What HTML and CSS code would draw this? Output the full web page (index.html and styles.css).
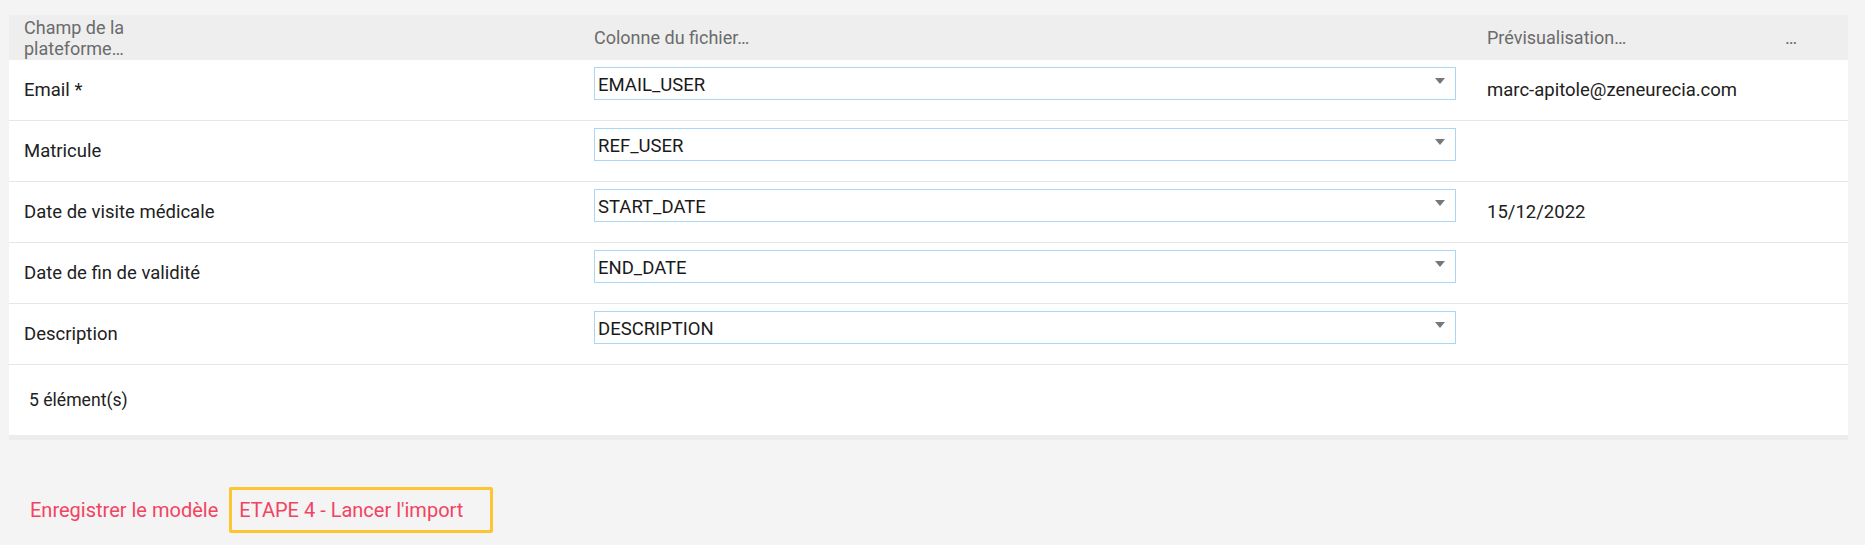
FILE: index.html
```html
<!DOCTYPE html>
<html lang="fr">
<head>
<meta charset="utf-8">
<title>Import</title>
<link rel="stylesheet" href="styles.css">
</head>
<body>
<div class="page">
  <div class="table">
    <div class="row head">
      <div class="cell hcell">Champ de la<br>plateforme…</div>
      <div class="cell hcell">Colonne du fichier…</div>
      <div class="cell hcell">Prévisualisation…</div>
      <div class="cell hcell">…</div>
    </div>
    <div class="row">
      <div class="cell label">Email *</div>
      <div class="cell selcell"><div class="select"><span>EMAIL_USER</span><span class="arrow"></span></div></div>
      <div class="cell label">marc-apitole@zeneurecia.com</div>
      <div class="cell"></div>
    </div>
    <div class="row">
      <div class="cell label">Matricule</div>
      <div class="cell selcell"><div class="select"><span>REF_USER</span><span class="arrow"></span></div></div>
      <div class="cell label"></div>
      <div class="cell"></div>
    </div>
    <div class="row">
      <div class="cell label">Date de visite médicale</div>
      <div class="cell selcell"><div class="select"><span>START_DATE</span><span class="arrow"></span></div></div>
      <div class="cell label">15/12/2022</div>
      <div class="cell"></div>
    </div>
    <div class="row">
      <div class="cell label">Date de fin de validité</div>
      <div class="cell selcell"><div class="select"><span>END_DATE</span><span class="arrow"></span></div></div>
      <div class="cell label"></div>
      <div class="cell"></div>
    </div>
    <div class="row">
      <div class="cell label">Description</div>
      <div class="cell selcell"><div class="select"><span>DESCRIPTION</span><span class="arrow"></span></div></div>
      <div class="cell label"></div>
      <div class="cell"></div>
    </div>
    <div class="footer">5 élément(s)</div>
  </div>
  <div class="actions">
    <button class="btn">Enregistrer le modèle</button>
    <button class="btn focused">ETAPE 4 - Lancer l'import</button>
  </div>
</div>
</body>
</html>
```
FILE: styles.css
```css
html, body {
  margin: 0;
  padding: 0;
  background: #f4f4f4;
  font-family: Roboto, "Liberation Sans", Arial, sans-serif;
  color: #212121;
}
.page {
  padding: 15px 0 0 9px;
}
.table {
  width: 1839px;
  background: #ffffff;
  border-bottom: 5px solid #ececec;
}
.row {
  display: grid;
  grid-template-columns: 570px 893px 298px 78px;
  height: 61px;
  box-sizing: border-box;
  border-bottom: 1px solid #e6e6e6;
}
.row.head {
  height: 45px;
  background: #eeeeee;
  border-bottom: none;
}
.cell {
  padding: 0 16px 0 15px;
  display: flex;
  align-items: center;
  font-size: 18.5px;
}
.hcell {
  color: #6b6b6b;
  font-size: 18px;
  line-height: 21px;
}
.label {
  padding-bottom: 1px;
}
.selcell {
  align-items: flex-start;
  padding-top: 7px;
}
.select {
  flex: 1;
  height: 33px;
  box-sizing: border-box;
  border: 1px solid #a9d6f7;
  display: flex;
  align-items: center;
  justify-content: space-between;
  padding: 3px 10px 0 3px;
  font-size: 18.5px;
  color: #1a1a1a;
}
.arrow {
  width: 0;
  height: 0;
  border-left: 5px solid transparent;
  border-right: 5px solid transparent;
  border-top: 6px solid #777777;
  margin-top: -8px;
}
.footer {
  height: 70px;
  display: flex;
  align-items: center;
  padding-left: 20px;
  font-size: 17.6px;
}
.actions {
  display: flex;
  align-items: center;
  gap: 11px;
  margin-top: 47px;
  padding-left: 21px;
}
.btn {
  background: transparent;
  border: 0;
  font-family: Roboto, "Liberation Sans", Arial, sans-serif;
  font-size: 20px;
  color: #f2435f;
  height: 46px;
  padding: 0;
}
.btn.focused {
  border: 3px solid #fcc531;
  border-radius: 2px;
  padding: 0 27px 0 7px;
}
```
